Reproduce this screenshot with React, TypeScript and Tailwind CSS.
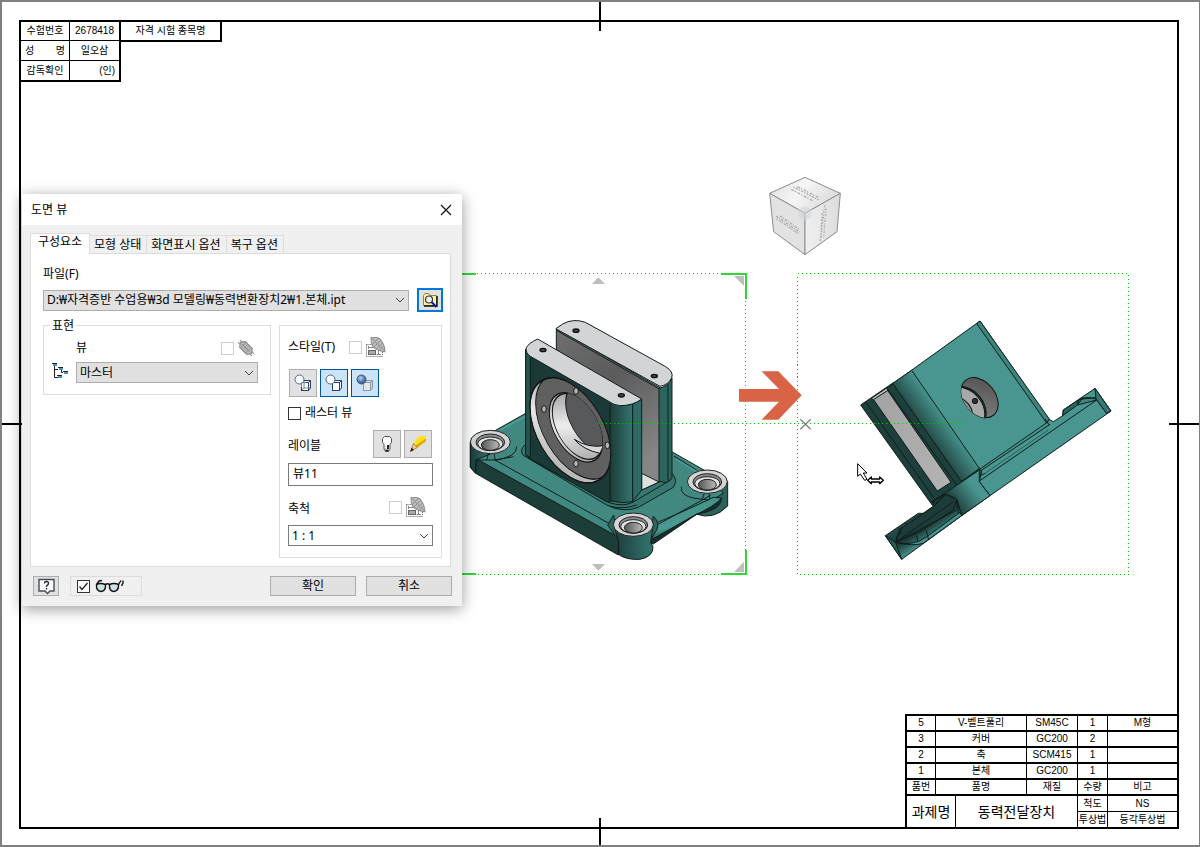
import type { ReactNode } from 'react';
import { clsx } from 'clsx';

const PARTS = [
  { no: '5', name: 'V-벨트풀리', material: 'SM45C', qty: '1', note: 'M형' },
  { no: '3', name: '커버', material: 'GC200', qty: '2', note: '' },
  { no: '2', name: '축', material: 'SCM415', qty: '1', note: '' },
  { no: '1', name: '본체', material: 'GC200', qty: '1', note: '' },
  { no: '품번', name: '품명', material: '재질', qty: '수량', note: '비고' },
];

const TABS = ['구성요소', '모형 상태', '화면표시 옵션', '복구 옵션'];

function ExamineeTable() {
  return (
    <div className="flex items-start text-[10px] leading-3">
      <table className="table-fixed border-separate border-spacing-0">
        <tbody className="text-center">
          <tr>
            <th className="h-[19px] w-[49px] border-r border-b border-black p-0 font-normal">수험번호</th>
            <td className="w-[51px] border-r-2 border-b border-black p-0">2678418</td>
          </tr>
          <tr>
            <th className="h-5 border-r border-b border-black p-0 font-normal">
              <span className="flex justify-between px-1">
                <span>성</span>
                <span>명</span>
              </span>
            </th>
            <td className="border-r-2 border-b border-black p-0">일오삼</td>
          </tr>
          <tr>
            <th className="h-[21px] border-r border-b-2 border-black p-0 font-normal">감독확인</th>
            <td className="border-r-2 border-b-2 border-black p-0 pr-1 text-right">(인)</td>
          </tr>
        </tbody>
      </table>
      <div className="flex h-5 w-[101px] items-center justify-center border-r-2 border-b-2 border-black">
        자격 시험 종목명
      </div>
    </div>
  );
}

function PartsTable() {
  return (
    <table className="w-[272px] table-fixed border-separate border-spacing-0 self-end border-t-2 border-l-2 border-black text-center text-[10px] leading-3">
      <colgroup>
        <col className="w-[29px]" />
        <col className="w-5" />
        <col className="w-[71px]" />
        <col className="w-[51px]" />
        <col className="w-[30px]" />
        <col className="w-[69px]" />
      </colgroup>
      <tbody>
        {PARTS.map((part) => (
          <tr key={part.no}>
            <td className="h-4 border-r border-b-2 border-black p-0">{part.no}</td>
            <td colSpan={2} className="border-r border-b-2 border-black p-0">{part.name}</td>
            <td className="border-r border-b-2 border-black p-0">{part.material}</td>
            <td className="border-r border-b-2 border-black p-0">{part.qty}</td>
            <td className="border-b-2 border-black p-0">{part.note}</td>
          </tr>
        ))}
        <tr>
          <td colSpan={2} rowSpan={2} className="border-r border-black p-0 text-sm">과제명</td>
          <td colSpan={2} rowSpan={2} className="border-r border-black p-0 text-sm">동력전달장치</td>
          <td className="h-4 border-r border-b border-black p-0">척도</td>
          <td className="border-b border-black p-0">NS</td>
        </tr>
        <tr>
          <td className="h-[15px] border-r border-black p-0 whitespace-nowrap">투상법</td>
          <td className="p-0">등각투상법</td>
        </tr>
      </tbody>
    </table>
  );
}

function MountBoss({ x, y }: { x: number; y: number }) {
  return (
    <g stroke="#222" strokeWidth="3">
      <ellipse cx={x} cy={y} rx="60" ry="35" fill="#d3d4d5" />
      <ellipse cx={x} cy={y + 1} rx="43" ry="25" fill="#8b8c8d" />
      <ellipse cx={x} cy={y + 5} rx="38" ry="20" fill="#e2e3e4" />
      <ellipse cx={x} cy={y + 9} rx="27" ry="16" fill="url(#bossBore)" />
    </g>
  );
}

function IsometricView() {
  return (
    <svg className="absolute top-[260px] left-[460px]" width="300" height="320" viewBox="0 0 900 960" aria-hidden="true">
      <defs>
        <linearGradient id="bossBore">
          <stop offset="0" stopColor="#555" />
          <stop offset="1" stopColor="#bbb" />
        </linearGradient>
        <linearGradient id="cornerShade">
          <stop offset="0" stopColor="#1d3b39" />
          <stop offset="1" stopColor="#33766f" />
        </linearGradient>
        <linearGradient id="slotShade" x1="0" y1="0" x2="0.5" y2="1">
          <stop offset="0" stopColor="#707070" />
          <stop offset="0.45" stopColor="#5b5b5b" />
          <stop offset="1" stopColor="#858585" />
        </linearGradient>
        <linearGradient id="boreShade" x1="0" y1="0" x2="0.6" y2="1">
          <stop offset="0" stopColor="#8a8a8c" />
          <stop offset="0.55" stopColor="#ededee" />
          <stop offset="1" stopColor="#aeaeb0" />
        </linearGradient>
        <linearGradient id="rimShade" x1="0" y1="0" x2="0" y2="1">
          <stop offset="0" stopColor="#9a9a9a" />
          <stop offset="0.5" stopColor="#e8e8e8" />
          <stop offset="1" stopColor="#b5b5b5" />
        </linearGradient>
        <linearGradient id="edgeShade" x1="0" y1="0" x2="0.35" y2="1">
          <stop offset="0" stopColor="#418980" />
          <stop offset="0.7" stopColor="#4a9b92" />
          <stop offset="1" stopColor="#173432" />
        </linearGradient>
        <clipPath id="rimClip">
          <circle r="121" transform="matrix(1 .577 0 1.165 331 511)" />
        </clipPath>
        <clipPath id="boreClip">
          <circle r="80" transform="matrix(1 .577 0 1.165 348 502)" />
        </clipPath>
      </defs>

      {/* view border and grips */}
      <g fill="none" stroke="#00c400" strokeWidth="3" strokeDasharray="3 9" shapeRendering="crispEdges">
        <path d="M3 40.5H856.5V943.5H3" />
      </g>
      <g fill="none" stroke="#2fd837" strokeWidth="6" shapeRendering="crispEdges">
        <path d="M3 41H48M783 41H857V117M3 942H48M783 942H857V870" />
      </g>
      <path fill="#bfbfbf" d="M822 48H852V78ZM822 936H852V905ZM415 52L435 72H396ZM396 912H435L415 932Z" />

      <g stroke="#101f1e" strokeWidth="3" strokeLinejoin="round">
        {/* base plate */}
        <path fill="#2c615c" d="M700 690L708 762Q760 782 803 738V664Z" />
        <path fill="#418980" d="M31 548Q45 520 105 512L197 460H450L635 575L735 632L790 700L580 820L475 840L50 598Z" />
        <path fill="#1d3d39" d="M31 548V622L47 640L475 885L480 834L50 597Z" />
        <path fill="url(#cornerShade)" d="M31 548V622L47 640V600L91 582Z" />
        <path fill="url(#edgeShade)" d="M578 793Q660 760 760 712L785 714Q770 745 708 763L578 840Z" />
        <path fill="#14302e" d="M562 846L700 768Q765 738 785 714Q785 750 710 763L580 852Z" />
        <path fill="none" d="M50 600L105 600L160 590M105 600L450 792M47 600V638M475 837V885M170 560Q172 590 106 601M664 680Q660 708 705 715L745 720M642 588L712 632M590 795L600 790L752 706" />
        <path fill="none" stroke="#4fa298" strokeWidth="4" d="M118 512L195 470M648 597L715 638" />
        <path fill="none" d="M85 582L80 600M103 582L105 600M733 700L727 716M747 700L749 716" />
        <path fill="#2c645e" d="M443 795L461 765L475 840ZM580 768Q600 790 590 810L565 850Z" />
        <path fill="url(#cornerShade)" d="M461 794L475 842L478 885Q500 900 540 898Q580 890 579 860L572 848L579 794Z" />

        {/* fillet under the housing */}
        <path fill="#36776f" d="M197 553Q176 570 190 586L440 735Q490 760 535 742L640 682Q655 660 636 640L450 620Z" />
        <path fill="none" d="M205 595L448 728Q490 742 520 726L632 660M450 738Q485 750 530 735" />

        {/* rear wall */}
        <path fill="url(#slotShade)" d="M289 205L600 383V665L545 690L520 600V410L289 270Z" />
        <path fill="#dfe0e1" d="M545 640L597 666L545 690Z" />
        <path fill="#2c645e" d="M597 385Q625 378 636 355V655L620 668L597 664Z" />
        <path fill="none" d="M624 372V662" />
        <path fill="#d3d4d6" d="M289 205L308 192Q340 174 376 187L617 320Q642 335 635 354Q624 375 600 379L289 207Z" />
        <path fill="none" d="M289 211L598 387" />

        {/* front wall */}
        <path fill="#1b3936" d="M197 268V585L205 593L440 725H452V425L211 288Z" />
        <path fill="#26544f" d="M197 268V585L211 592V290Z" />
        <path fill="url(#cornerShade)" d="M450 425Q490 440 518 432V725Q485 732 450 722Z" />
        <path fill="#2e6a64" d="M518 432L545 418V690L518 725Z" />
        <path fill="#d3d4d6" d="M233 237L545 417Q520 437 480 437Q460 435 448 425L211 289Q195 278 199 263Q205 250 233 237Z" />
      </g>

      {/* bearing seat */}
      <g stroke="#151515" strokeWidth="3">
        <circle r="121" fill="url(#rimShade)" transform="matrix(1 .577 0 1.165 331 511)" />
        <g clipPath="url(#rimClip)">
          <circle r="121" fill="#606061" transform="matrix(1 .577 0 1.165 348 500)" />
        </g>
        <circle r="121" fill="none" transform="matrix(1 .577 0 1.165 331 511)" />
        <circle r="80" fill="url(#boreShade)" transform="matrix(1 .577 0 1.165 348 502)" />
        <g clipPath="url(#boreClip)">
          <circle r="76" fill="none" transform="matrix(1 .577 0 1.165 353 499)" />
          <circle r="80" fill="#58595a" transform="matrix(1 .577 0 1.165 397 474)" />
          <path fill="#d8d8da" d="M343 538Q385 565 430 557L420 580Q370 570 343 538Z" />
        </g>
        <g fill="#b5b5b7">
          <ellipse cx="348" cy="393" rx="7" ry="10" />
          <ellipse cx="252" cy="447" rx="7" ry="10" />
          <ellipse cx="442" cy="556" rx="7" ry="10" />
          <ellipse cx="348" cy="611" rx="7" ry="10" />
        </g>
      </g>
      <g fill="#444" stroke="#111" strokeWidth="4">
        <ellipse cx="249" cy="270" rx="9" ry="5" />
        <ellipse cx="348" cy="212" rx="9" ry="5" />
        <ellipse cx="484" cy="406" rx="9" ry="5" />
        <ellipse cx="583" cy="348" rx="9" ry="5" />
      </g>
      <MountBoss x={91} y={546} />
      <MountBoss x={742} y={665} />
      <MountBoss x={520} y={794} />
    </svg>
  );
}

function ProjectedView() {
  return (
    <svg className="absolute top-[265px] left-[790px]" width="350" height="315" viewBox="0 0 1050 945" aria-hidden="true">
      <defs>
        <linearGradient id="roundShade" gradientUnits="userSpaceOnUse" x1="400" y1="510" x2="470" y2="460">
          <stop offset="0" stopColor="#1e403c" />
          <stop offset="1" stopColor="#48968f" />
        </linearGradient>
        <linearGradient id="footShade" gradientUnits="userSpaceOnUse" x1="500" y1="730" x2="590" y2="660">
          <stop offset="0" stopColor="#1e403c" />
          <stop offset="0.7" stopColor="#48968f" />
        </linearGradient>
        <linearGradient id="lowShade" gradientUnits="userSpaceOnUse" x1="370" y1="740" x2="425" y2="825">
          <stop offset="0" stopColor="#24504c" />
          <stop offset="0.6" stopColor="#1d3c39" />
          <stop offset="1" stopColor="#48968f" />
        </linearGradient>
        <linearGradient id="stripShade" x1="0" y1="0" x2="1" y2="1">
          <stop offset="0" stopColor="#a2a2a2" />
          <stop offset="1" stopColor="#b4b4b4" />
        </linearGradient>
        <linearGradient id="holeShade" x1="0" y1="0" x2="1" y2="1">
          <stop offset="0" stopColor="#4e4e4e" />
          <stop offset="1" stopColor="#858585" />
        </linearGradient>
        <clipPath id="holeClip">
          <ellipse rx="67" ry="47" transform="translate(569 398) rotate(52)" />
        </clipPath>
      </defs>
      <rect x="22.5" y="25.5" width="993" height="903" fill="none" stroke="#00c400" strokeWidth="3" strokeDasharray="3 9" shapeRendering="crispEdges" />

      <g stroke="#0e1d1c" strokeWidth="3" strokeLinejoin="round">
        <path fill="#48968f" d="M310 355L570 168L775 462L790 470L818 452L820 435L915 370L963 438L600 692L515 752L480 690Z" />
        <path fill="#3d847d" d="M560 176L570 168L778 462L770 474Z" />
        <path fill="#1e403c" d="M212 420L310 353L515 650L428 722Z" />
        <path fill="url(#roundShade)" d="M308 355L365 316L568 610L515 650Z" />
        <path fill="url(#stripShade)" d="M250 403L292 375L483 652L442 678Z" />
        <path fill="#bdbdbd" d="M244 400L290 369L294 376L250 404Z" />
        <path fill="none" d="M228 412L432 700M290 368L500 660M310 355L297 365" />

        {/* flange, right half */}
        <path fill="none" d="M515 650L775 470M568 620L780 478M565 610L575 618L568 650L600 692M568 648L920 405L950 445M575 618L570 632L586 625M765 462L778 480" />
        <path fill="none" stroke="#2a5f5a" d="M585 625L775 495" />
        <path fill="#2c645e" d="M818 452L820 435L868 403L862 420Z" />
        <path fill="#3f8780" d="M868 403L915 398L920 405L862 420Z" />
        <path fill="#337770" d="M915 370L963 438L950 445L918 402Z" />
        <path fill="none" d="M868 403Q890 393 918 402M862 420L880 396" />

        {/* flange, left half */}
        <path fill="url(#footShade)" d="M425 712L568 615V650L600 692L515 752L500 700L468 688Z" />
        <path fill="url(#lowShade)" d="M286 812L385 745H400L428 725L470 690L500 705L515 752L335 883Z" />
        <path fill="#1d3c39" d="M317 832Q320 800 350 778L430 725L468 688L500 705L490 735L390 800Z" />
        <path fill="#459189" d="M317 832Q370 845 410 815L510 742L515 752L400 835Q370 845 317 832Z" />
        <path fill="#265a55" d="M286 812L317 832L335 883Z" />
        <path fill="none" d="M317 832L490 710M317 832Q350 815 500 735M325 790L335 810M345 772L350 780M317 832L335 785M380 812L384 832M408 795L416 825M425 712L440 700L468 688M432 726L430 710M500 705L505 745" />
      </g>

      <g stroke="#111" strokeWidth="3">
        <ellipse rx="67" ry="47" fill="url(#holeShade)" transform="translate(569 398) rotate(52)" />
        <g clipPath="url(#holeClip)">
          <ellipse rx="67" ry="47" fill="#1e403c" transform="translate(533 425) rotate(52)" />
          <ellipse rx="67" ry="47" fill="#a9a9a9" transform="translate(529 428) rotate(52)" />
          <ellipse rx="44" ry="30" fill="#8b8b8b" transform="translate(512 436) rotate(52)" />
        </g>
        <circle cx="555" cy="408" r="8" fill="#333" />
      </g>
    </svg>
  );
}

function CanvasMarks() {
  return (
    <>
      <svg className="absolute top-[423px] left-[598px]" width="366" height="1" aria-hidden="true">
        <path d="M0 .5H366" stroke="#00c400" strokeDasharray="1 3" shapeRendering="crispEdges" />
      </svg>
      <svg className="absolute top-[360px] left-[730px]" width="170" height="140" viewBox="0 0 510 420" aria-hidden="true">
        <path fill="#d96345" d="M27 87H147L95 34H145L215 106L145 179H95L147 125H27Z" />
        <path fill="none" stroke="#808080" strokeWidth="4" d="M211 178L242 208M242 178L211 208" />
        <path fill="#fff" stroke="#000" strokeWidth="3" d="M383 311V349L391 342L404 361L411 358L400 339H411Z" />
        <path fill="#fff" stroke="#000" strokeWidth="4" strokeLinejoin="round" d="M413 361L424 351V357H449V351L460 361L449 371V366H424V371Z" />
      </svg>
    </>
  );
}

function ViewCube() {
  return (
    <svg className="absolute top-[160px] left-[730px]" width="150" height="110" viewBox="0 0 450 330" aria-hidden="true">
      <defs>
        <linearGradient id="cubeTop" x1="0" y1="0" x2="1" y2="0.4">
          <stop offset="0" stopColor="#dedede" />
          <stop offset="0.5" stopColor="#f6f6f6" />
          <stop offset="1" stopColor="#dcdcdc" />
        </linearGradient>
        <linearGradient id="cubeSide">
          <stop offset="0" stopColor="#f0f0f0" />
          <stop offset="1" stopColor="#dcdcdc" />
        </linearGradient>
      </defs>
      <g stroke="#8c8c8c" strokeWidth="3" strokeLinejoin="round">
        <path fill="url(#cubeTop)" d="M225 52L331 100L225 160L119 100Z" />
        <path fill="#e2e2e2" d="M119 100L225 160V284L131 215Z" />
        <path fill="url(#cubeSide)" d="M331 100L321 215L225 284V160Z" />
      </g>
      <path fill="#d3d6da" opacity=".6" d="M205 147L225 138L245 147V172L225 182L205 172Z" />
      <g fill="none" stroke="#acacac" strokeWidth="4">
        <path strokeDasharray="9 3 4 5" d="M184 88L250 123M202 80L264 112" />
        <path strokeDasharray="4 4 7 3" d="M190 81L266 120M140 176L206 222" />
        <path strokeDasharray="8 3 3 4" d="M138 168L208 216M150 168L208 208" />
        <path strokeDasharray="6 5 3 3" d="M284 136L270 248M288 146L281 232M276 160L273 236" />
      </g>
    </svg>
  );
}

function Chevron() {
  return (
    <svg className="pointer-events-none absolute top-1/2 right-1 -mt-1" width="10" height="8" viewBox="0 0 10 8" aria-hidden="true">
      <path d="M1 2L5 6L9 2" fill="none" stroke="#444" />
    </svg>
  );
}

function Select({ id, label, value, filled, className }: { id: string; label: string; value: string; filled?: boolean; className?: string }) {
  return (
    <div className={clsx('relative', className)}>
      <select
        id={id}
        aria-label={label}
        defaultValue={value}
        className={clsx(
          'block h-[21px] w-full appearance-none border pr-4 pl-[3px] text-xs leading-4 outline-none',
          filled ? 'border-[#adadad] bg-[#e1e1e1]' : 'border-[#7a7a7a] bg-white',
        )}
      >
        <option>{value}</option>
      </select>
      <Chevron />
    </div>
  );
}

function Checkbox({ id, label, checked, disabled }: { id: string; label?: string; checked?: boolean; disabled?: boolean }) {
  return (
    <span className="relative block size-[13px] shrink-0">
      <input
        id={id}
        type="checkbox"
        aria-label={label}
        defaultChecked={checked}
        disabled={disabled}
        className={clsx('block size-[13px] appearance-none border bg-white', disabled ? 'border-[#cccccc]' : 'border-[#333333]')}
      />
      {checked && (
        <svg className="pointer-events-none absolute inset-0" width="13" height="13" viewBox="0 0 13 13" aria-hidden="true">
          <path d="M2.5 6.5L5 9.5L10.5 3" fill="none" stroke="#222" strokeWidth="1.3" />
        </svg>
      )}
    </span>
  );
}

function IconButton({ label, active, children }: { label: string; active?: boolean; children: ReactNode }) {
  return (
    <button
      type="button"
      aria-label={label}
      className={clsx(
        'flex size-7 items-center justify-center border',
        active ? 'border-[#005499] bg-[#cce4f7]' : 'border-[#adadad] bg-[#e1e1e1]',
      )}
    >
      {children}
    </button>
  );
}

function ChainIcon() {
  return (
    <svg width="16" height="16" viewBox="0 0 16 16" aria-hidden="true">
      <g transform="rotate(45 8 8)">
        <path d="M-3 6.500H3M-3 9.500H1M13 6.500H19M14 9.500H19" stroke="#8a8a8a" />
        <path d="M0 8L3 4H13L16 8L13 12H3Z" fill="#bdbdbd" stroke="#858585" />
        <path d="M4 4V12M6.500 4V12M9 4V12M11.500 4V12M2 8H14" stroke="#858585" strokeWidth=".8" />
      </g>
    </svg>
  );
}

function InheritIcon() {
  return (
    <svg width="20" height="20" viewBox="0 0 20 20" aria-hidden="true">
      <path d="M.5 7.5H6M.5 7.5V19.5H16M16.5 15V19.5" fill="none" stroke="#555" strokeDasharray="1 1" />
      <rect x="2.5" y="13.5" width="7" height="4" fill="#aaa" stroke="#666" />
      <path d="M2 10.5H9M2.500 9V12M9.500 9V12M12.500 12V17M10.5 17.5H15" fill="none" stroke="#888" />
      <g transform="rotate(46 12 7.500)">
        <path d="M2 7.500Q7 1 12 2.500Q18 3.500 22 7.500Q17 12 12 12.500Q7 13 2 7.500Z" fill="#bcbcbc" stroke="#8e8e8e" />
        <path d="M3 7.500H21M8 3V12M11 3V12M14 3V12M17 5V11" stroke="#8a8a8a" strokeWidth=".8" />
      </g>
    </svg>
  );
}

function StyleIcon({ kind }: { kind: 'hidden' | 'removed' | 'shaded' }) {
  const stroke = kind === 'shaded' ? '#8d98a8' : '#2c3f66';
  return (
    <svg width="18" height="18" viewBox="0 0 18 18" aria-hidden="true">
      <defs>
        <radialGradient id="ballShade" cx="0.4" cy="0.35">
          <stop offset="0" stopColor="#b9d3ef" />
          <stop offset="1" stopColor="#41679c" />
        </radialGradient>
      </defs>
      <path d="M7.500 8.500L9.500 6.500H16.500V14L14.500 16.500" fill={kind === 'shaded' ? '#d4d4d4' : '#eef3fa'} stroke={stroke} />
      <rect x="7.500" y="8.500" width="7" height="8" fill={kind === 'shaded' ? '#e6e6e6' : '#fff'} stroke={stroke} />
      <path d="M14.500 8.500L16.500 6.500" stroke={stroke} />
      <circle cx="5.500" cy="5.500" r="4.500" fill={kind === 'shaded' ? 'url(#ballShade)' : '#fff'} stroke={kind === 'shaded' ? '#365888' : '#4a648f'} />
      {kind === 'hidden' && <path d="M7.500 8.500H12M7.500 8.500V13M10 7V14H16M10 14L8 16" fill="none" stroke="#6b7fa3" />}
    </svg>
  );
}

function FolderIcon() {
  return (
    <svg width="16" height="16" viewBox="0 0 16 16" aria-hidden="true">
      <path d="M1.500 13.500V3.500L3 1.500H6.500L8 3.500H14.500V13.500Z" fill="#fbf3a2" stroke="#8b8640" />
      <path d="M2 14H15V4" fill="none" stroke="#111" strokeWidth="1.500" />
      <circle cx="7" cy="7.500" r="3.500" fill="#e8eef2" stroke="#333" strokeWidth="1.200" />
      <path d="M9.500 10L14.500 15" stroke="#0a1ca0" strokeWidth="2" />
    </svg>
  );
}

function TreeIcon() {
  return (
    <svg width="16" height="16" viewBox="0 0 16 16" aria-hidden="true">
      <path d="M2.500 3V14.500H6M3 6.500H6M9.500 7V9.500H11" fill="none" stroke="#222" />
      <path d="M0 .5H5M6 4.500H11M11 8.500H16M5 12.500H10" stroke="#222" />
      <path d="M1 2H5M7 6H11M12 10H16M6 14H10" stroke="#4f8fc9" strokeWidth="2" />
    </svg>
  );
}

function BulbIcon() {
  return (
    <svg width="12" height="18" viewBox="0 0 12 18" aria-hidden="true">
      <path d="M3.500 1.500H8.500L10.500 3.500V7.500L9 9.500V14L7.500 16.500H4.500L3 14V9.500L1.500 7.500V3.500Z" fill="#fff" stroke="#555" />
      <path d="M3 11.500H5M3 13.500H5" stroke="#aaa" />
      <path d="M7 10V14M4.500 15.500H7.500" stroke="#222" strokeWidth="2" />
    </svg>
  );
}

function PencilIcon() {
  return (
    <svg width="18" height="18" viewBox="0 0 18 18" aria-hidden="true">
      <path d="M4.500 8.500L10 1H17V6L8.500 12.500Z" fill="#ffe11a" />
      <path d="M8.500 12.500L17 6V3.500L6.500 10.500Z" fill="#e0a800" />
      <path d="M4.500 8.500L8.500 12.500L2 16Z" fill="#f3c68f" stroke="#8a5a20" strokeWidth=".6" />
      <path d="M1 17L2.500 12.500L5 15Z" fill="#222" />
    </svg>
  );
}

function GlassesIcon() {
  return (
    <svg width="30" height="14" viewBox="0 0 30 14" aria-hidden="true">
      <path d="M1.500 5.500Q5 3.500 10.500 5.500Q11 12 6 12.500Q1 12 1.500 5.500Z" fill="#cfe3e6" stroke="#111" strokeWidth="1.400" />
      <path d="M14.500 5.500Q19 3.500 23.500 5.500Q24 12 18.500 12.500Q14 12 14.500 5.500Z" fill="#cfe3e6" stroke="#111" strokeWidth="1.400" />
      <path d="M10.500 5.500Q12.500 4 14.500 5.500M1.500 5.500L4 2L7 1.500M23.500 5.500L26 1.500M26.500 7L28 4V1.500" fill="none" stroke="#111" strokeWidth="1.400" />
    </svg>
  );
}

function HelpIcon() {
  return (
    <svg width="17" height="17" viewBox="0 0 17 17" aria-hidden="true">
      <path d="M1 1.500H16V13H12L9.500 15.500L7 13H1Z" fill="#fbfbfb" stroke="#474c5e" strokeWidth="1.400" />
      <path d="M6.500 5.500Q6.500 3.500 8.500 3.500T10.500 5.500Q10.500 6.500 8.500 8V9M8.500 10V11.500" fill="none" stroke="#222a40" strokeWidth="1.400" />
    </svg>
  );
}

function StyleGroup() {
  return (
    <div className="w-[163px] border border-[#dcdcdc] px-2 pt-[11px] pb-[11px]">
      <div className="flex h-5 items-center">
        <label htmlFor="style-inherit" className="w-[61px]">스타일(T)</label>
        <Checkbox id="style-inherit" disabled />
        <span className="ml-1"><InheritIcon /></span>
      </div>
      <div className="mt-3 flex gap-[3px] pl-px">
        <IconButton label="은선"><StyleIcon kind="hidden" /></IconButton>
        <IconButton label="은선 제거" active><StyleIcon kind="removed" /></IconButton>
        <IconButton label="음영처리" active><StyleIcon kind="shaded" /></IconButton>
      </div>
      <div className="mt-2 flex h-4 items-center gap-1">
        <Checkbox id="raster" />
        <label htmlFor="raster">래스터 뷰</label>
      </div>
      <div className="mt-[9px] flex items-center justify-between pr-px">
        <label htmlFor="view-label" className="pt-1">레이블</label>
        <div className="flex gap-[3px]">
          <IconButton label="레이블 표시"><BulbIcon /></IconButton>
          <IconButton label="레이블 편집"><PencilIcon /></IconButton>
        </div>
      </div>
      <input
        id="view-label"
        type="text"
        defaultValue="뷰11"
        className="mt-[5px] block h-[23px] w-[145px] border border-[#7a7a7a] bg-white px-1 pb-1 text-xs leading-4 outline-none"
      />
      <div className="mt-[11px] flex h-5 items-center">
        <label htmlFor="scale" className="w-[101px] pt-1">축척</label>
        <Checkbox id="scale-inherit" label="축척 상속" disabled />
        <span className="ml-1"><InheritIcon /></span>
      </div>
      <Select id="scale" label="축척" value="1 : 1" className="mt-2 w-[145px]" />
    </div>
  );
}

function DrawingViewDialog() {
  return (
    <section
      role="dialog"
      aria-labelledby="dialog-title"
      className="absolute top-[194px] left-[22px] w-[440px] bg-[#f0f0f0] pb-[10px] text-xs leading-4 shadow-[0_3px_14px_rgba(0,0,0,0.4)]"
    >
      <header className="flex h-[31px] items-center justify-between bg-white pr-[10px] pl-[9px]">
        <h1 id="dialog-title">도면 뷰</h1>
        <button type="button" aria-label="닫기">
          <svg width="12" height="12" viewBox="0 0 12 12" aria-hidden="true">
            <path d="M1 1L11 11M11 1L1 11" stroke="#111" strokeWidth="1.2" />
          </svg>
        </button>
      </header>

      <div role="tablist" className="relative flex items-end pt-2 pl-2">
        {TABS.map((tab, i) => (
          <button
            key={tab}
            type="button"
            role="tab"
            aria-selected={i === 0}
            className={clsx(
              'border-[#dcdcdc] whitespace-nowrap',
              i === 0 ? '-mb-px h-[21px] w-[60px] border border-b-0 bg-white pb-1' : 'h-[18px] border-t border-r pr-[5px] pl-1',
            )}
          >
            {tab}
          </button>
        ))}
      </div>

      <div role="tabpanel" className="mr-[11px] ml-2 border border-[#dcdcdc] bg-white pt-3 pr-[7px] pb-2 pl-3">
        <label htmlFor="file" className="block">파일(F)</label>
        <div className="mt-[6px] flex items-center gap-2">
          <Select id="file" label="파일" value="D:₩자격증반 수업용₩3d 모델링₩동력변환장치2₩1.본체.ipt" filled className="min-w-0 flex-1" />
          <button type="button" aria-label="찾아보기" className="flex h-6 w-[26px] items-center justify-center border-2 border-[#0078d7] bg-[#e1e1e1]">
            <FolderIcon />
          </button>
        </div>

        <div className="mt-[13px] flex items-start gap-2">
          <fieldset className="relative flex h-[70px] w-[228px] items-end gap-2 border border-[#dcdcdc] pr-3 pb-[11px] pl-2">
            <legend className="absolute -top-2 left-[6px] bg-white px-[2px]">표현</legend>
            <span className="pb-1"><TreeIcon /></span>
            <div className="flex-1">
              <div className="flex items-center pr-1">
                <label htmlFor="view" className="flex-1">뷰</label>
                <Checkbox id="view-assoc" label="연관" disabled />
                <span className="ml-1"><ChainIcon /></span>
              </div>
              <Select id="view" label="뷰" value="마스터" filled className="mt-[6px]" />
            </div>
          </fieldset>
          <StyleGroup />
        </div>
      </div>

      <footer className="mt-[9px] flex items-center pr-[10px] pl-[11px]">
        <button type="button" aria-label="도움말" className="flex h-5 w-[26px] items-center justify-center border border-[#adadad] bg-[#e1e1e1]">
          <HelpIcon />
        </button>
        <div className="ml-[11px] flex h-5 w-[72px] items-center gap-[5px] border border-[#dcdcdc] pl-[6px]">
          <Checkbox id="preview" label="미리보기" checked />
          <GlassesIcon />
        </div>
        <div className="ml-auto flex gap-[10px]">
          <button type="button" className="h-5 w-[86px] border border-[#adadad] bg-[#e1e1e1]">확인</button>
          <button type="button" className="h-5 w-[86px] border border-[#adadad] bg-[#e1e1e1]">취소</button>
        </div>
      </footer>
    </section>
  );
}

export default function App() {
  return (
    <main className="relative flex min-h-screen border-2 border-r border-[#808080] bg-white pt-[18px] pr-5 pb-4 pl-[17px] font-['Liberation_Sans','Noto_Sans_CJK_KR',sans-serif] text-black">
      <div className="flex flex-1 flex-col justify-between border-2 border-black">
        <ExamineeTable />
        <PartsTable />
      </div>

      {/* centring marks on the sheet edges */}
      <div className="absolute top-0 left-1/2 -ml-[2px] h-[29px] w-[2px] bg-black" />
      <div className="absolute bottom-0 left-1/2 -ml-[2px] h-[27px] w-[2px] bg-black" />
      <div className="absolute top-1/2 left-0 -mt-px h-[2px] w-5 bg-black" />
      <div className="absolute top-1/2 right-0 -mt-px h-[2px] w-[30px] bg-black" />

      <div className="absolute -top-[2px] -left-[2px] font-['Noto_Sans','Noto_Sans_CJK_KR',sans-serif]">
        <IsometricView />
        <ProjectedView />
        <CanvasMarks />
        <ViewCube />
        <DrawingViewDialog />
      </div>
    </main>
  );
}
